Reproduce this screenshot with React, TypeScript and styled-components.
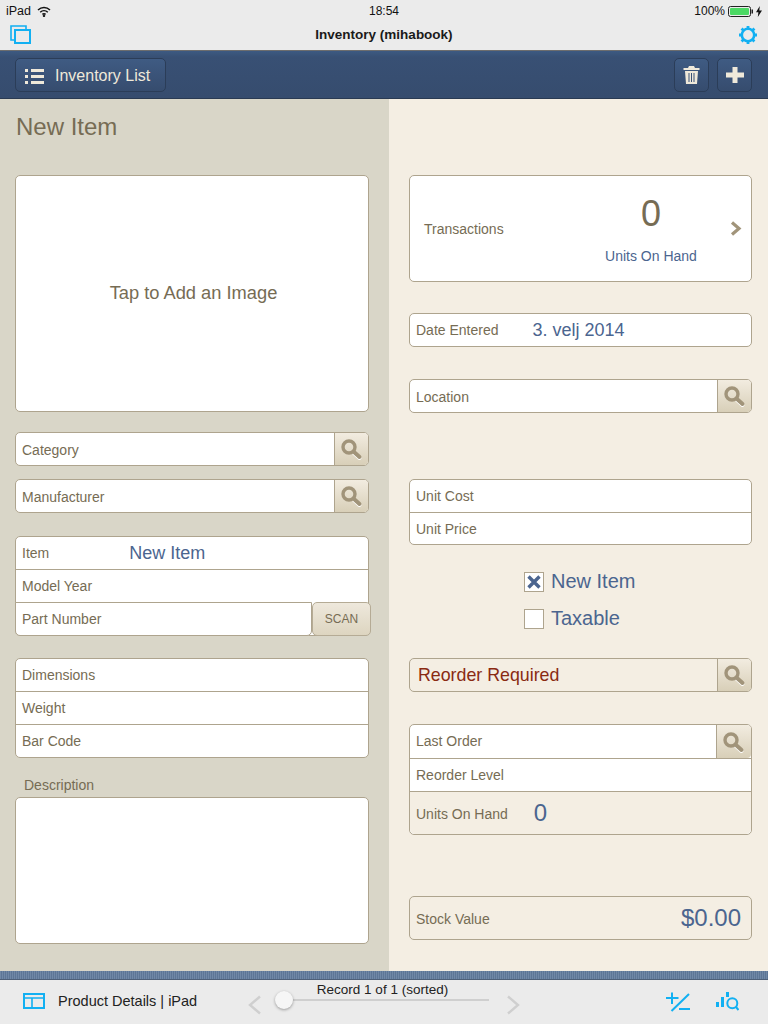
import React from "react";
import styled, { createGlobalStyle } from "styled-components";

const Global = createGlobalStyle`
  html, body { margin: 0; padding: 0; background: #ebebeb; }
  body { font-family: "Liberation Sans", Arial, sans-serif; }
  * { box-sizing: border-box; }
`;

const Page = styled.div`
  width: 768px; height: 1024px; display: flex; flex-direction: column; overflow: hidden;
`;
const StatusBar = styled.div`
  height: 22px; background: #ebebeb; display: grid; grid-template-columns: 1fr auto 1fr; align-items: center;
  padding: 0 6px; font-size: 12px; color: #111;
`;
const StatusLeft = styled.div`display: flex; align-items: center; gap: 6px; font-size: 12.5px;`;
const StatusRight = styled.div`display: flex; align-items: center; justify-content: flex-end; gap: 3px;`;
const Time = styled.div`font-weight: 400; font-size: 12px;`;
const NavBar = styled.div`
  height: 29px; background: #ebebeb; border-bottom: 1px solid #6d6d6d; display: flex; align-items: center;
  justify-content: space-between; padding: 0 10px 2px 10px; position: relative;
`;
const NavTitle = styled.div`
  position: absolute; left: 0; right: 0; top: 3px; text-align: center; font-size: 13.5px; font-weight: 700; color: #1a1a1a; line-height: 20px;
`;
const Header = styled.div`
  height: 48px; background: linear-gradient(#3d5a82 0, #385074 6px, #364c6e 100%); border-bottom: 1px solid #2a3a52;
  display: flex; align-items: center; justify-content: space-between; padding: 1px 16px 0 15px;
`;
const HeadButton = styled.div`
  height: 34px; border-radius: 5px; border: 1px solid #2b3d58; background: linear-gradient(#3f5b83, #364c6e);
  display: flex; align-items: center; justify-content: center; color: #efe9da; font-size: 16px;
`;
const ListButton = styled(HeadButton)`width: 151px; gap: 11px; padding: 2px 0 0 9px; justify-content: flex-start;`;
const IconButton = styled(HeadButton)`width: 35px;`;
const HeadRight = styled.div`display: flex; gap: 8px;`;
const Body = styled.div`
  height: 872px; display: grid; grid-template-columns: 389px 379px;
`;
const LeftCol = styled.div`background: #d9d6c8; padding: 0 20px 0 15px; display: flex; flex-direction: column;`;
const RightCol = styled.div`background: #f4eee3; padding: 0 16px 0 20px; display: flex; flex-direction: column;`;
const PageTitle = styled.div`
  font-size: 24px; color: #766c54; height: 28px; line-height: 28px; margin-top: 14px; margin-left: 1px;
`;
const ImageBox = styled.div`
  height: 237px; margin-top: 34px; background: #fff; border: 1px solid #aea48e; border-radius: 5px;
  display: flex; align-items: center; justify-content: center; color: #766c54; font-size: 18.3px;
  padding: 0 0 2px 3px;
`;
const Group = styled.div<{ $top: number; $h?: number; $tan?: boolean }>`
  margin-top: ${(p) => p.$top}px; border: 1px solid #aea48e; border-radius: 5px;
  background: ${(p) => (p.$tan ? "#f4eee3" : "#fff")};
  display: flex; flex-direction: column; position: relative;
  ${(p) => (p.$h ? `height: ${p.$h}px;` : "")}
`;
const Row = styled.div<{ $h?: number; $tan?: boolean }>`
  height: ${(p) => p.$h ?? 33}px; display: flex; align-items: center; padding-left: 6px;
  font-size: 14px; color: #766c54; flex: none;
  border-top: 1px solid #aea48e;
  &:first-child { border-top: none; }
  ${(p) => (p.$tan ? "background: #f4eee3; border-radius: 0 0 5px 5px;" : "")}
`;
const Value = styled.span<{ $left: number; $size: number }>`
  margin-left: ${(p) => p.$left}px; font-size: ${(p) => p.$size}px; color: #4b658f;
`;
const Flag = styled.span`flex: 1; font-size: 17.8px; color: #8a2a12; margin-left: 2px;`;
const Caption = styled.span`padding-top: 2px;`;
const FieldLabel = styled(Caption)`flex: 1;`;
const RaisedLabel = styled.span`flex: 1; padding-bottom: 2px;`;
const SearchCell = styled.div<{ $w?: number }>`
  width: ${(p) => p.$w ?? 34}px; align-self: stretch; border-left: 1px solid #aea48e; border-radius: 0 4px 4px 0;
  background: linear-gradient(#f2ece0, #d8cfb8); display: flex; align-items: center; justify-content: center; flex: none;
  padding-right: 2px;
`;
const PartInput = styled.div`
  position: absolute; left: -1px; bottom: -1px; width: 297px; height: 34px; border: 1px solid #aea48e; border-radius: 0 0 5px 5px;
  background: #fff; display: flex; align-items: center; padding-left: 6px; font-size: 14px; color: #766c54;
`;
const ScanButton = styled.div`
  position: absolute; right: -3px; bottom: -1px; width: 59px; height: 34px; border: 1px solid #b5ab95; border-radius: 5px;
  background: linear-gradient(#eee8dc, #ddd5c0); display: flex; align-items: center; justify-content: center; font-size: 12px; color: #766c54;
`;
const DescLabel = styled.div`font-size: 14px; color: #766c54; margin: 19px 0 0 9px; height: 20px; line-height: 16px;`;
const TextArea = styled.div`height: 147px; background: #fff; border: 1px solid #aea48e; border-radius: 5px;`;
const TransCard = styled.div`
  margin-top: 76px; height: 107px; background: #fff; border: 1px solid #aea48e; border-radius: 5px; position: relative;
  display: grid; grid-template-columns: 142px 200px; align-items: center; padding-left: 14px;
`;
const TransLabel = styled.div`font-size: 14px; color: #766c54;`;
const TransStat = styled.div`display: flex; flex-direction: column; align-items: center; width: 174px; margin: 4px 0 0 -2px;`;
const TransCount = styled.div`font-size: 36px; color: #766c54; line-height: 40px; margin-top: -4px;`;
const TransUnits = styled.div`font-size: 14px; color: #4b658f; margin-top: 14px; line-height: 16px;`;
const Chevron = styled.div`position: absolute; right: 9px; top: 45px; display: flex;`;
const CheckRow = styled.div<{ $top: number }>`
  margin: ${(p) => p.$top}px 0 0 115px; display: flex; align-items: center; gap: 7px; height: 28px; font-size: 20px; color: #4b658f;
`;
const CheckText = styled.span`margin-top: -2px;`;
const CheckBox = styled.div`
  width: 20px; height: 20px; border: 1px solid #aea48e; background: #fff; display: flex; align-items: center; justify-content: center;
`;
const StockValue = styled.span`margin-left: auto; margin-right: 10px; font-size: 24px; color: #4b658f;`;
const Stripe = styled.div`
  height: 9px; background: repeating-linear-gradient(90deg, #7088a6 0, #7088a6 1px, #5d7696 1px, #5d7696 2px);
  border-bottom: 1px solid #4e6078;
`;
const Bottom = styled.div`
  flex: 1; background: #ebebeb; display: flex; align-items: center; position: relative; padding: 0 0 2px 23px;
`;
const BottomTitle = styled.div`font-size: 14.5px; color: #222; margin-left: 13px;`;
const Record = styled.div`
  position: absolute; left: 0; width: 765px; top: 2px; text-align: center; font-size: 13.5px; color: #222; line-height: 16px;
`;
const Track = styled.div`position: absolute; left: 284px; top: 19px; width: 205px; height: 2px; background: #cfcfcf;`;
const Thumb = styled.div`
  position: absolute; left: -9px; top: -8px; width: 18px; height: 18px; border-radius: 50%; background: #f6f6f6;
  box-shadow: 0 1px 3px rgba(0,0,0,.35);
`;
const NavArrow = styled.svg<{ $x: number }>`position: absolute; left: ${(p) => p.$x}px; top: 15px;`;
const ToolIcons = styled.div`position: absolute; right: 29px; top: 12px; display: flex; gap: 25px; align-items: center;`;

const Search = () => (
  <svg width="24" height="24" viewBox="0 0 24 24" fill="none">
    <path d="M15 15 L20.5 20" stroke="#fff" strokeWidth="4" strokeLinecap="round" transform="translate(0 1)" />
    <circle cx="10" cy="10" r="6" stroke="#a1947a" strokeWidth="3.4" />
    <path d="M15 15 L20.5 20" stroke="#a1947a" strokeWidth="4" strokeLinecap="round" />
  </svg>
);

const Bars = () => (
  <svg width="19" height="15" viewBox="0 0 19 15" fill="#efe9da">
    <rect x="0" y="0" width="3" height="3" /><rect x="0" y="6" width="3" height="3" /><rect x="0" y="12" width="3" height="3" />
    <rect x="6" y="0" width="13" height="3" /><rect x="6" y="6" width="13" height="3" /><rect x="6" y="12" width="13" height="3" />
  </svg>
);

const App = () => (
  <Page>
    <Global />
    <StatusBar>
      <StatusLeft>
        iPad
        <svg width="14" height="11" viewBox="0 0 14 11" fill="none" stroke="#111" strokeWidth="1.5">
          <path d="M1 4 C4.5 .8 9.5 .8 13 4" /><path d="M3.2 6.3 C5.4 4.3 8.6 4.3 10.8 6.3" />
          <path d="M5.4 8.4 C6.4 7.6 7.6 7.6 8.6 8.4" /><circle cx="7" cy="9.8" r=".5" />
        </svg>
      </StatusLeft>
      <Time>18:54</Time>
      <StatusRight>
        100%
        <svg width="25" height="11" viewBox="0 0 25 11" fill="none">
          <rect x=".5" y=".5" width="22" height="10" rx="2" stroke="#222" />
          <rect x="2" y="2" width="19" height="7" rx="1" fill="#4cd964" />
          <rect x="23.5" y="3.5" width="1.5" height="4" fill="#222" />
        </svg>
        <svg width="6" height="11" viewBox="0 0 6 11" fill="#111"><path d="M3.8 0 L0 6.2 H2.4 L1.8 11 L6 4.4 H3.3 Z" /></svg>
      </StatusRight>
    </StatusBar>
    <NavBar>
      <svg width="21" height="20" viewBox="0 0 21 20" fill="none" stroke="#12b0f2" strokeWidth="2">
        <rect x="5" y="5" width="15" height="13" />
        <path d="M5 15 H1 V1 H16 V4" strokeWidth="1.6" />
      </svg>
      <NavTitle>Inventory (mihabook)</NavTitle>
      <svg width="20" height="20" viewBox="0 0 20 20" fill="none" stroke="#12b0f2">
        <circle cx="10" cy="10" r="6.2" strokeWidth="2.6" />
        <path d="M10 1 V4 M10 16 V19 M1 10 H4 M16 10 H19 M3.6 3.6 L5.7 5.7 M14.3 14.3 L16.4 16.4 M3.6 16.4 L5.7 14.3 M14.3 5.7 L16.4 3.6" strokeWidth="2.8" />
      </svg>
    </NavBar>
    <Header>
      <ListButton>
        <Bars />
        Inventory List
      </ListButton>
      <HeadRight>
        <IconButton>
          <svg width="17" height="18" viewBox="0 0 17 18" fill="#efe9da">
            <path d="M6 0 H11 L12 2 H16.5 V4 H.5 V2 H5 Z" />
            <path fillRule="evenodd" d="M2 5 H15 L14 18 H3 Z M5.5 7 H6.5 V16 H5.5 Z M8 7 H9 V16 H8 Z M10.5 7 H11.5 V16 H10.5 Z" />
          </svg>
        </IconButton>
        <IconButton>
          <svg width="18" height="16" viewBox="0 0 18 16" fill="#efe9da"><path d="M6.5 0 H11.5 V5.5 H18 V10.5 H11.5 V16 H6.5 V10.5 H0 V5.5 H6.5 Z" /></svg>
        </IconButton>
      </HeadRight>
    </Header>
    <Body>
      <LeftCol>
        <PageTitle>New Item</PageTitle>
        <ImageBox>Tap to Add an Image</ImageBox>
        <Group $top={20} $h={34}>
          <Row $h={32}><FieldLabel>Category</FieldLabel><SearchCell><Search /></SearchCell></Row>
        </Group>
        <Group $top={13} $h={34}>
          <Row $h={32}><FieldLabel>Manufacturer</FieldLabel><SearchCell><Search /></SearchCell></Row>
        </Group>
        <Group $top={23} $h={100}>
          <Row $h={32}>Item<Value $left={80} $size={18}>New Item</Value></Row>
          <Row>Model Year</Row>
          <PartInput>Part Number</PartInput>
          <ScanButton>SCAN</ScanButton>
        </Group>
        <Group $top={22}>
          <Row $h={32}>Dimensions</Row>
          <Row>Weight</Row>
          <Row>Bar Code</Row>
        </Group>
        <DescLabel>Description</DescLabel>
        <TextArea />
      </LeftCol>
      <RightCol>
        <TransCard>
          <TransLabel>Transactions</TransLabel>
          <TransStat>
            <TransCount>0</TransCount>
            <TransUnits>Units On Hand</TransUnits>
          </TransStat>
          <Chevron>
            <svg width="12" height="15" viewBox="0 0 12 15" fill="none" stroke="#a1947a" strokeWidth="3.2"><path d="M2 1.5 L9 7.5 L2 13.5" /></svg>
          </Chevron>
        </TransCard>
        <Group $top={31} $h={34}>
          <Row $h={32}>Date Entered<Value $left={34} $size={18}>3. velj 2014</Value></Row>
        </Group>
        <Group $top={32} $h={34}>
          <Row $h={32}><FieldLabel>Location</FieldLabel><SearchCell><Search /></SearchCell></Row>
        </Group>
        <Group $top={66} $h={66}>
          <Row $h={32}>Unit Cost</Row>
          <Row $h={32}>Unit Price</Row>
        </Group>
        <CheckRow $top={23}>
          <CheckBox>
            <svg width="14" height="14" viewBox="0 0 14 14" fill="none" stroke="#4b658f" strokeWidth="3.4"><path d="M1.5 1.5 L12.5 12.5 M12.5 1.5 L1.5 12.5" /></svg>
          </CheckBox>
          <CheckText>New Item</CheckText>
        </CheckRow>
        <CheckRow $top={9}>
          <CheckBox />
          <CheckText>Taxable</CheckText>
        </CheckRow>
        <Group $top={25} $h={34} $tan>
          <Row $h={32}><Flag>Reorder Required</Flag><SearchCell><Search /></SearchCell></Row>
        </Group>
        <Group $top={32} $h={111}>
          <Row><RaisedLabel>Last Order</RaisedLabel><SearchCell $w={35}><Search /></SearchCell></Row>
          <Row>Reorder Level</Row>
          <Row $h={43} $tan><Caption>Units On Hand</Caption><Value $left={26} $size={24}>0</Value></Row>
        </Group>
        <Group $top={61} $h={44} $tan>
          <Row $h={42}><Caption>Stock Value</Caption><StockValue>$0.00</StockValue></Row>
        </Group>
      </RightCol>
    </Body>
    <Stripe />
    <Bottom>
      <svg width="22" height="16" viewBox="0 0 22 16" fill="none" stroke="#12b0f2" strokeWidth="2">
        <rect x="1" y="1" width="20" height="14" /><path d="M1 5 H21 M9 5 V15" strokeWidth="1.6" />
      </svg>
      <BottomTitle>Product Details | iPad</BottomTitle>
      <NavArrow $x={248} width="14" height="20" viewBox="0 0 14 20" fill="none" stroke="#cfcfcf" strokeWidth="2.4"><path d="M12 1.5 L2 10 L12 18.5" /></NavArrow>
      <Record>Record 1 of 1 (sorted)</Record>
      <Track><Thumb /></Track>
      <NavArrow $x={506} width="14" height="20" viewBox="0 0 14 20" fill="none" stroke="#cfcfcf" strokeWidth="2.4"><path d="M2 1.5 L12 10 L2 18.5" /></NavArrow>
      <ToolIcons>
        <svg width="24" height="20" viewBox="0 0 24 20" fill="none" stroke="#12b0f2" strokeWidth="2">
          <path d="M0 6 H12.5 M6 .5 V12 M5.5 19 L23 2 M13 17 H24" />
        </svg>
        <svg width="24" height="20" viewBox="0 0 24 20" fill="none" stroke="#12b0f2">
          <path d="M2.5 10 V15 M7.5 5 V15 M12.5 0 V5" strokeWidth="3" />
          <circle cx="17.3" cy="11.3" r="5" strokeWidth="2" />
          <path d="M21 15 L23.5 18" strokeWidth="2" />
        </svg>
      </ToolIcons>
    </Bottom>
  </Page>
);

export default App;
